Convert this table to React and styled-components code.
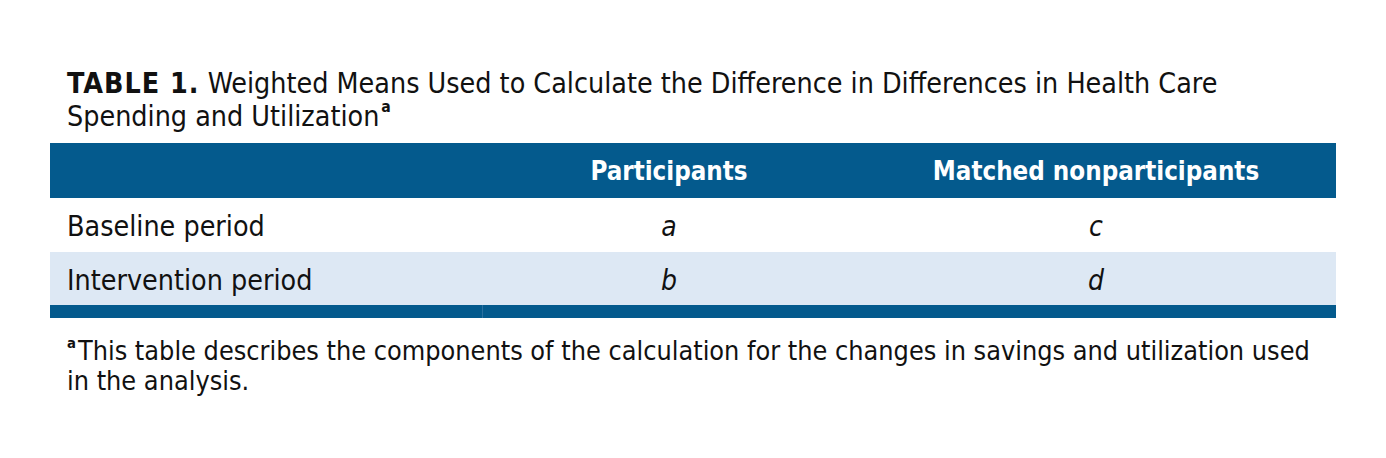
import React from "react";
import styled, { createGlobalStyle } from "styled-components";

const GlobalStyle = createGlobalStyle`
  html, body {
    margin: 0;
    padding: 0;
    background: #ffffff;
  }
  body {
    font-family: "DejaVu Sans Condensed", "DejaVu Sans", sans-serif;
    color: #111111;
  }
`;

const Page = styled.div`
  width: 1386px;
  padding: 67px 50px 0;
  box-sizing: border-box;
`;

const Caption = styled.h1`
  margin: 0 0 10px;
  padding-left: 17px;
  font-size: 28.4px;
  line-height: 33px;
  font-weight: 400;
  color: #111111;
`;

const Label = styled.span`
  font-weight: 700;
  letter-spacing: 1px;
`;

const Sup = styled.sup`
  display: inline-block;
  font-size: 0.55em;
  font-weight: 700;
  line-height: 1;
  vertical-align: top;
  margin: ${(p) => (p.$lead ? "0 2px 0 0" : "0 0 0 2px")};
`;

const Table = styled.div`
  width: 100%;
`;

const Row = styled.div`
  display: grid;
  grid-template-columns: 432px 374px 480px;
  height: ${(p) => p.$h}px;
  background: ${(p) => p.$bg};
  align-items: center;
`;

const HeadCell = styled.div`
  color: #ffffff;
  font-weight: 700;
  font-size: 25.7px;
  text-align: center;
`;

const StubCell = styled.div`
  padding: 3px 0 0 17px;
  font-size: 28.4px;
`;

const ValueCell = styled.div`
  padding-top: 3px;
  text-align: center;
  font-size: 28px;
  font-style: italic;
`;

const BottomBar = styled.div`
  display: grid;
  grid-template-columns: 432px 1fr;
  height: 13px;
  background: #045a8d;
`;

const BarPart = styled.div`
  & + & {
    border-left: 1px solid #2a70a0;
  }
`;

const Footnote = styled.p`
  margin: 18px 0 0;
  padding-left: 17px;
  font-size: 26.8px;
  line-height: 30px;
  color: #111111;
`;

const rows = [
  { label: "Baseline period", p: "a", m: "c", bg: "#ffffff", h: 54 },
  { label: "Intervention period", p: "b", m: "d", bg: "#dde8f4", h: 53 },
];

export default function App() {
  return (
    <Page>
      <GlobalStyle />
      <Caption>
        <Label>TABLE 1.</Label> Weighted Means Used to Calculate the Difference in Differences in Health Care
        Spending and Utilization<Sup>a</Sup>
      </Caption>
      <Table>
        <Row $h={55} $bg="#045a8d">
          <HeadCell />
          <HeadCell>Participants</HeadCell>
          <HeadCell>Matched nonparticipants</HeadCell>
        </Row>
        {rows.map((r) => (
          <Row key={r.label} $h={r.h} $bg={r.bg}>
            <StubCell>{r.label}</StubCell>
            <ValueCell>{r.p}</ValueCell>
            <ValueCell>{r.m}</ValueCell>
          </Row>
        ))}
        <BottomBar>
          <BarPart />
          <BarPart />
        </BottomBar>
      </Table>
      <Footnote>
        <Sup $lead>a</Sup>This table describes the components of the calculation for the changes in savings and utilization used
        in the analysis.
      </Footnote>
    </Page>
  );
}
